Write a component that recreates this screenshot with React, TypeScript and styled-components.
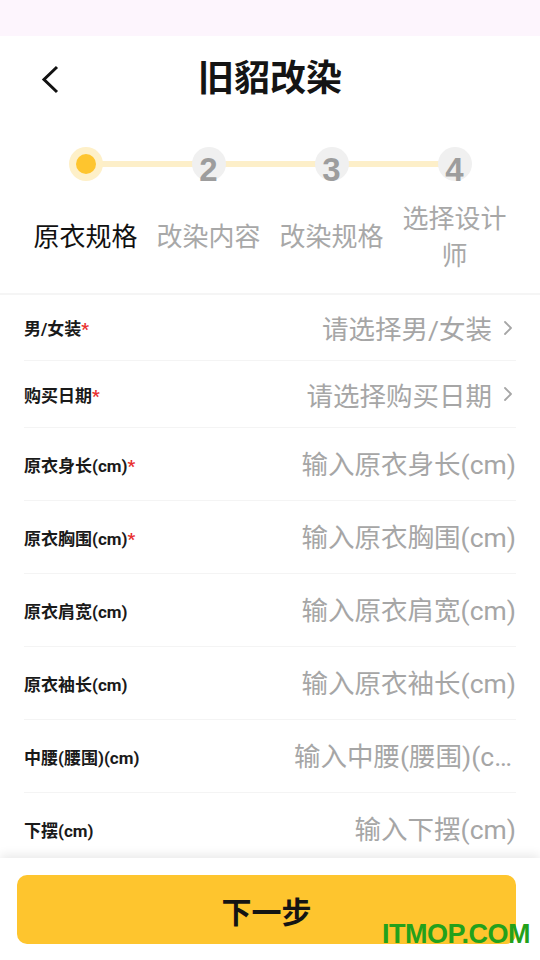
import React from "react";
import styled, { createGlobalStyle } from "styled-components";

const FONT = `Roboto, "Noto Sans CJK SC", "Noto Sans", sans-serif`;

const Global = createGlobalStyle`
  * { box-sizing: border-box; }
  html, body { margin: 0; padding: 0; background: #fff; }
  body { font-family: ${FONT}; }
`;

const Page = styled.div`
  width: 540px;
  height: 960px;
  display: flex;
  flex-direction: column;
  overflow: hidden;
  position: relative;
  background: #fff;
`;

const StatusBar = styled.div`
  height: 36px;
  background: #fdf5fd;
  flex: none;
`;

const Header = styled.div`
  height: 88px;
  flex: none;
  display: grid;
  grid-template-columns: 80px 1fr 80px;
  align-items: center;
`;

const BackBtn = styled.div`
  display: flex;
  align-items: center;
  justify-content: flex-start;
  padding-left: 40px;
  padding-bottom: 3px;
  height: 100%;
`;

const Title = styled.h1`
  margin: 0 0 3px;
  text-align: center;
  font-size: 36px;
  font-weight: 700;
  color: #141414;
  line-height: 1;
`;

const Steps = styled.div`
  flex: none;
  padding: 23px 24px 0;
  height: 171px;
  border-bottom: 2px solid #f5f5f5;
`;

const Track = styled.div`
  display: grid;
  grid-template-columns: repeat(4, 1fr);
  height: 34px;
  position: relative;
`;

const Line = styled.div`
  position: absolute;
  left: 61px;
  right: 61px;
  top: 14px;
  height: 6px;
  background: #fdefc9;
`;

const Dot = styled.div<{ $active?: boolean }>`
  justify-self: center;
  width: 34px;
  height: 34px;
  border-radius: 50%;
  background: ${(p) => (p.$active ? "#fef0c8" : "#f0f0f0")};
  display: flex;
  align-items: center;
  justify-content: center;
  position: relative;
  z-index: 1;
`;

const Inner = styled.div`
  width: 20px;
  height: 20px;
  border-radius: 50%;
  background: #fec52e;
`;

const Num = styled.span`
  font-family: "Liberation Sans", Arial, sans-serif;
  font-weight: 700;
  font-size: 33px;
  color: #9d9d9d;
  line-height: 1;
  margin-top: 11px;
`;

const Labels = styled.div`
  display: grid;
  grid-template-columns: repeat(4, 1fr);
  height: 75px;
  margin-top: 19px;
  align-items: center;
`;

const StepLabel = styled.div<{ $active?: boolean }>`
  text-align: center;
  font-size: 26px;
  line-height: 37px;
  color: ${(p) => (p.$active ? "#111" : "#a8a8a8")};
  padding: 0 2px;
`;

const Form = styled.div`
  flex: 1;
  overflow: hidden;
  padding: 0 24px;
`;

const Row = styled.div<{ $h: number }>`
  height: ${(p) => p.$h}px;
  border-bottom: 1.5px solid #f4f4f4;
  display: flex;
  align-items: center;
  justify-content: space-between;
`;

const Label = styled.div`
  font-size: 17px;
  font-weight: 700;
  color: #1a1a1a;
  white-space: nowrap;
`;

const Star = styled.span`
  color: #e8312f;
  font-weight: 700;
`;

const SelectValue = styled.div`
  display: flex;
  align-items: center;
  gap: 11px;
  font-size: 26.5px;
  color: #a6a6a6;
  margin-right: 3px;
`;

const Input = styled.input`
  width: 222px;
  border: none;
  outline: none;
  background: transparent;
  text-align: right;
  font-family: ${FONT};
  font-size: 26.5px;
  padding: 0;
  text-overflow: ellipsis;
  &::placeholder {
    color: #a6a6a6;
  }
`;

const Footer = styled.div`
  flex: none;
  height: 102px;
  background: #fff;
  box-shadow: 0 -3px 10px rgba(0, 0, 0, 0.09);
  padding: 17px 24px 0 17px;
  position: relative;
  z-index: 2;
`;

const NextBtn = styled.button`
  width: 499px;
  height: 69px;
  border: none;
  border-radius: 10px;
  background: #fec52e;
  font-family: ${FONT};
  font-size: 30px;
  font-weight: 700;
  color: #141414;
  display: flex;
  align-items: center;
  justify-content: center;
`;

const Watermark = styled.div`
  position: absolute;
  right: 10px;
  bottom: 10px;
  font-family: "Liberation Sans", Arial, sans-serif;
  font-weight: 700;
  font-size: 27px;
  color: #23a11b;
  letter-spacing: -0.5px;
  z-index: 3;
`;

const Chevron = () => (
  <svg width="10" height="18" viewBox="0 0 10 18">
    <path d="M2 3l6 6-6 6" fill="none" stroke="#a6a6a6" strokeWidth="1.8" strokeLinecap="round" strokeLinejoin="round" />
  </svg>
);

const selects = [
  { label: "男/女装", value: "请选择男/女装", req: true },
  { label: "购买日期", value: "请选择购买日期", req: true },
];

const inputs = [
  { label: "原衣身长(cm)", ph: "输入原衣身长(cm)", req: true },
  { label: "原衣胸围(cm)", ph: "输入原衣胸围(cm)", req: true },
  { label: "原衣肩宽(cm)", ph: "输入原衣肩宽(cm)", req: false },
  { label: "原衣袖长(cm)", ph: "输入原衣袖长(cm)", req: false },
  { label: "中腰(腰围)(cm)", ph: "输入中腰(腰围)(cm)", req: false },
  { label: "下摆(cm)", ph: "输入下摆(cm)", req: false },
];

const stepLabels = ["原衣规格", "改染内容", "改染规格", "选择设计师"];

export default function App() {
  return (
    <Page>
      <Global />
      <StatusBar />
      <Header>
        <BackBtn>
          <svg width="20" height="30" viewBox="0 0 20 30">
            <path d="M17 3L4 15.5 17 28" fill="none" stroke="#111" strokeWidth="3" />
          </svg>
        </BackBtn>
        <Title>旧貂改染</Title>
        <div />
      </Header>
      <Steps>
        <Track>
          <Line />
          <Dot $active>
            <Inner />
          </Dot>
          <Dot>
            <Num>2</Num>
          </Dot>
          <Dot>
            <Num>3</Num>
          </Dot>
          <Dot>
            <Num>4</Num>
          </Dot>
        </Track>
        <Labels>
          {stepLabels.map((s, i) => (
            <StepLabel key={s} $active={i === 0}>
              {s}
            </StepLabel>
          ))}
        </Labels>
      </Steps>
      <Form>
        {selects.map((s) => (
          <Row key={s.label} $h={s.label === "男/女装" ? 66 : 67}>
            <Label>
              {s.label}
              {s.req && <Star>*</Star>}
            </Label>
            <SelectValue>
              {s.value}
              <Chevron />
            </SelectValue>
          </Row>
        ))}
        {inputs.map((s) => (
          <Row key={s.label} $h={73}>
            <Label>
              {s.label}
              {s.req && <Star>*</Star>}
            </Label>
            <Input placeholder={s.ph} />
          </Row>
        ))}
      </Form>
      <Footer>
        <NextBtn>下一步</NextBtn>
      </Footer>
      <Watermark>ITMOP.COM</Watermark>
    </Page>
  );
}
